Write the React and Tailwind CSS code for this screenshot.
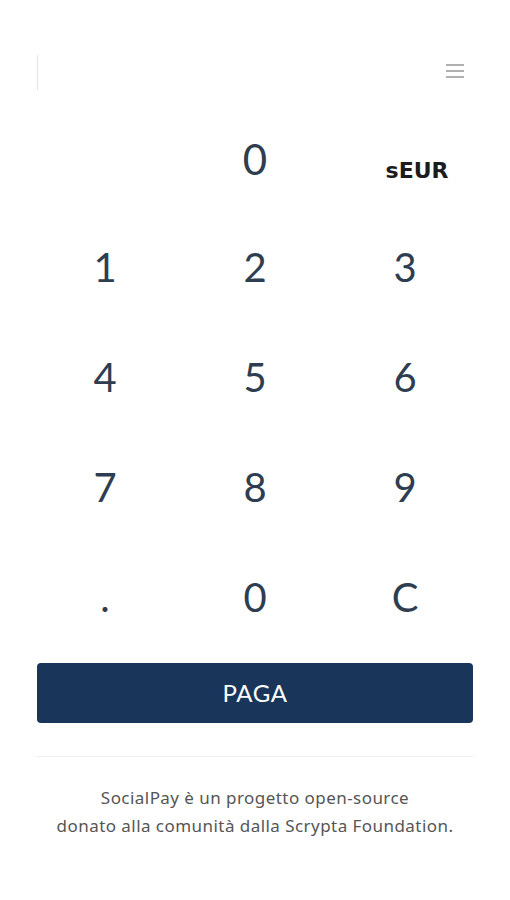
const KEYS = ['1', '2', '3', '4', '5', '6', '7', '8', '9', '.', '0', 'C']

export default function App() {
  return (
    <div className="w-[510px] h-[900px] bg-white font-['Lato',sans-serif] text-[#2e3d50]">
      <div className="px-[37px]">
        <header className="h-[105px] pt-[55px] flex items-start justify-between">
          <div className="w-px h-[35px] bg-[#e4e4e4]" />
          <button className="mt-[9px] mr-[9px] flex flex-col gap-[4px] w-[18px]">
            <span className="h-[2px] bg-[#b0b0b0]" />
            <span className="h-[2px] bg-[#b0b0b0]" />
            <span className="h-[2px] bg-[#b0b0b0]" />
          </button>
        </header>

        <div className="-mx-[7px] grid grid-cols-3">
          <div className="h-[110px]" />
          <div className="h-[110px] flex items-center justify-center text-[42px] leading-none pb-[2px]">0</div>
          <div className="h-[110px] flex items-center justify-center pt-[22px] pl-[24px] text-[22px] font-bold text-[#1c1c1c] leading-none font-['DejaVu_Sans',sans-serif]">
            sEUR
          </div>
          {KEYS.map(k => (
            <button key={k} className="h-[110px] flex items-center justify-center pb-[6px] text-[40px] leading-none">
              {k}
            </button>
          ))}
        </div>

        <button className="mt-[8px] w-full h-[60px] rounded-[4px] bg-[#19365a] text-white text-[24px] tracking-wide">
          PAGA
        </button>

        <div className="mt-[33px] h-px bg-[#eeeeee]" />

        <p className="mt-[27px] text-center text-[17px] tracking-[0.45px] leading-[28px] text-[#555] font-['Noto_Sans',sans-serif]">
          SocialPay è un progetto open-source
          <br />
          donato alla comunità dalla Scrypta Foundation.
        </p>
      </div>
    </div>
  )
}
